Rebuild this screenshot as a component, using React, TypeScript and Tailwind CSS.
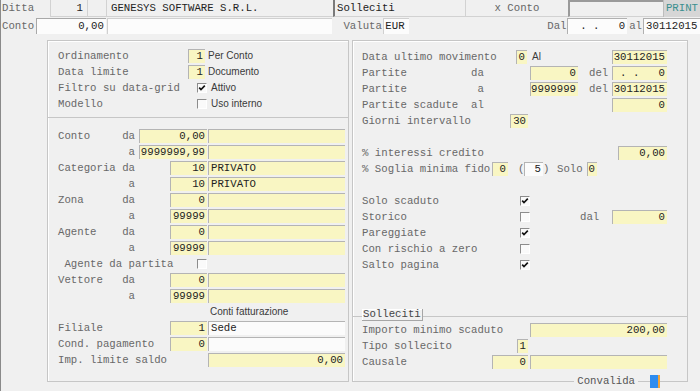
import type { ReactNode } from "react";

const mono = "font-['Liberation_Mono','Courier_New',monospace]";
const sans = "font-['Liberation_Sans',Arial,sans-serif]";

function Box({
  w,
  children,
  white = false,
  left = false,
}: {
  w: string;
  children?: ReactNode;
  white?: boolean;
  left?: boolean;
}) {
  return (
    <div
      className={`h-[14px] shrink-0 flex items-center overflow-hidden whitespace-pre border-l border-t border-[#b4b4b4] text-[#222] ${
        left ? "justify-start pl-[2px]" : "justify-end pr-[2px]"
      } ${white ? "bg-[#fbfbfb]" : "bg-[#f9f6c3]"} ${w}`}
    >
      {children}
    </div>
  );
}

function Check({ on = false }: { on?: boolean }) {
  return (
    <div className="w-[10px] h-[10px] shrink-0 flex items-center justify-center border-l border-t border-[#8c8c8c] border-r border-b border-r-white border-b-white bg-[#fafafa]">
      {on && (
        <svg width="8" height="8" viewBox="0 0 8 8">
          <path d="M1.2 3.6 L3 5.6 L6.8 1.6" stroke="#111" strokeWidth="1.6" fill="none" />
        </svg>
      )}
    </div>
  );
}

function Row({ children }: { children?: ReactNode }) {
  return <div className="flex items-center h-[16px]">{children}</div>;
}

function L({ w, children }: { w: string; children?: ReactNode }) {
  return <div className={`shrink-0 whitespace-pre text-[#686868] ${w}`}>{children}</div>;
}

function S({ children, className = "" }: { children: ReactNode; className?: string }) {
  return <span className={`${sans} text-[10px] text-[#3a3a3a] ${className}`}>{children}</span>;
}

function Range({ label, a, b = "", wide = false }: { label: string; a: string; b?: string; wide?: boolean }) {
  return (
    <Row>
      <L w="w-[81px]">{label}</L>
      <div className="w-[68px] flex justify-end shrink-0">
        <Box w={wide ? "w-[68px]" : "w-[37px]"}>{a}</Box>
      </div>
      <div className="ml-[1px]">
        <Box w="w-[137px]" left>
          {b}
        </Box>
      </div>
    </Row>
  );
}

export default function App() {
  return (
    <div className={`${mono} text-[10.7px] leading-none w-[700px] h-[391px] overflow-hidden bg-[#f0f0f0] border-l border-[#8a8a8a] text-[#686868]`}>
      {/* testata */}
      <div className="flex h-[17px] items-stretch">
        <div className="w-[49px] pl-[1px] flex items-center">Ditta</div>
        <div className="w-[37px] border-l border-b border-[#d2d2d2] flex items-center justify-end pr-[4px] text-[#222]">1</div>
        <div className="w-[19px] border-l border-b border-[#d2d2d2]" />
        <div className="w-[227px] border-l border-b border-[#d2d2d2] flex items-center pl-[4px] text-[#222]">GENESYS SOFTWARE S.R.L.</div>
        <div className="w-[132px] border-l-2 border-b border-l-[#7a7a7a] border-b-[#d2d2d2] flex items-center pl-[2px] text-[#222]">Solleciti</div>
        <div className="w-[103px] border-l border-b border-[#d2d2d2] flex items-center justify-center text-[#666]">x Conto</div>
        <div className="flex-1 border-l-2 border-t-2 border-[#9a9a9a] border-b border-b-[#d2d2d2]" />
        <div className="w-[37px] bg-[#d6d6d6] border-l border-[#bdbdbd] flex items-center justify-end pr-[2px] text-[#3a8f8f]">PRINT</div>
      </div>
      <div className="flex h-[18px] items-center">
        <div className="w-[35px] pl-[1px]">Conto</div>
        <div className="w-[70px] h-[16px] bg-[#fcfcfc] border-l border-t border-[#a8a8a8] flex items-center justify-end pr-[2px] text-[#222]">0,00</div>
        <div className="ml-[1px] w-[226px] h-[16px] bg-[#fcfcfc] border-l border-t border-[#d0d0d0]" />
        <div className="ml-[11px] w-[40px]">Valuta</div>
        <div className="w-[26px] h-[16px] bg-[#fcfcfc] border-l border-t border-[#d0d0d0] flex items-center pl-[1px] text-[#222]">EUR</div>
        <div className="ml-[138px] w-[20px]">Dal</div>
        <div className="w-[60px] h-[16px] bg-[#fcfcfc] border-l border-t border-[#b0b0b0] flex items-center justify-end pr-[2px] whitespace-pre text-[#222]">{". .   0"}</div>
        <div className="ml-[2px] w-[14px]">al</div>
        <div className="w-[57px] h-[16px] bg-[#fcfcfc] border-l border-t border-[#b0b0b0] flex items-center pl-[2px] text-[#222]">30112015</div>
      </div>

      {/* corpo */}
      <div className="flex mt-[5px] ml-[46px] gap-[3px]">
        <div className="w-[302px] h-[342px] flex flex-col border border-[#c6c6c6] shadow-[inset_1px_1px_0_#ffffff]">
          <div className="h-[77px] pt-[7px] pl-[10px] border-b border-[#c6c6c6]">
            <Row>
              <L w="w-[130px]">Ordinamento</L>
              <Box w="w-[17px]">1</Box>
              <S className="ml-[3px]">Per Conto</S>
            </Row>
            <Row>
              <L w="w-[130px]">Data limite</L>
              <Box w="w-[17px]">1</Box>
              <S className="ml-[3px]">Documento</S>
            </Row>
            <Row>
              <L w="w-[139px]">Filtro su data-grid</L>
              <Check on />
              <S className="ml-[4px]">Attivo</S>
            </Row>
            <Row>
              <L w="w-[139px]">Modello</L>
              <Check />
              <S className="ml-[4px]">Uso interno</S>
            </Row>
          </div>
          <div className="pt-[10px] pl-[10px]">
            <Range label="Conto     da" a="0,00" wide />
            <Range label="           a" a="9999999,99" wide />
            <Range label="Categoria da" a="10" b="PRIVATO" />
            <Range label="           a" a="10" b="PRIVATO" />
            <Range label="Zona      da" a="0" />
            <Range label="           a" a="99999" />
            <Range label="Agente    da" a="0" />
            <Range label="           a" a="99999" />
            <Row>
              <L w="w-[139px]"> Agente da partita</L>
              <Check />
            </Row>
            <Range label="Vettore   da" a="0" />
            <Range label="           a" a="99999" />
            <Row>
              <S className="ml-[152px]">Conti fatturazione</S>
            </Row>
            <Row>
              <L w="w-[112px]">Filiale</L>
              <Box w="w-[37px]">1</Box>
              <div className="ml-[1px]">
                <Box w="w-[137px]" left white>
                  Sede
                </Box>
              </div>
            </Row>
            <Row>
              <L w="w-[112px]">Cond. pagamento</L>
              <Box w="w-[37px]">0</Box>
              <div className="ml-[1px]">
                <Box w="w-[137px]" white />
              </div>
            </Row>
            <Row>
              <L w="w-[150px]">Imp. limite saldo</L>
              <Box w="w-[137px]">0,00</Box>
            </Row>
          </div>
        </div>

        <div className="w-[336px] h-[342px] flex flex-col">
          <div className="h-[277px] pt-[8px] pl-[9px] border border-[#c6c6c6] shadow-[inset_1px_1px_0_#ffffff]">
            <Row>
              <L w="w-[154px]">Data ultimo movimento</L>
              <div className="w-[96px] flex items-center shrink-0">
                <Box w="w-[11px]">0</Box>
                <S className="ml-[5px]">Al</S>
              </div>
              <Box w="w-[55px]">30112015</Box>
            </Row>
            <Row>
              <L w="w-[168px]">{"Partite          da"}</L>
              <Box w="w-[48px]">0</Box>
              <L w="w-[34px] pl-[11px]">del</L>
              <Box w="w-[55px]">{". .   0"}</Box>
            </Row>
            <Row>
              <L w="w-[168px]">{"Partite           a"}</L>
              <Box w="w-[48px]">9999999</Box>
              <L w="w-[34px] pl-[11px]">del</L>
              <Box w="w-[55px]">30112015</Box>
            </Row>
            <Row>
              <L w="w-[250px]">{"Partite scadute  al"}</L>
              <Box w="w-[55px]">0</Box>
            </Row>
            <Row>
              <L w="w-[148px]">Giorni intervallo</L>
              <Box w="w-[18px]">30</Box>
            </Row>
            <Row />
            <Row>
              <L w="w-[256px]">% interessi credito</L>
              <Box w="w-[49px]">0,00</Box>
            </Row>
            <Row>
              <L w="w-[130px]">% Soglia minima fido</L>
              <Box w="w-[16px]">0</Box>
              <L w="w-[16px] pl-[10px]">(</L>
              <Box w="w-[19px]" white>
                5
              </Box>
              <L w="w-[14px]">)</L>
              <L w="w-[30px]">Solo</L>
              <Box w="w-[10px]">0</Box>
            </Row>
            <Row />
            <Row>
              <L w="w-[158px]">Solo scaduto</L>
              <Check on />
            </Row>
            <Row>
              <L w="w-[158px]">Storico</L>
              <Check />
              <L w="w-[82px] pl-[50px]">dal</L>
              <Box w="w-[55px]">0</Box>
            </Row>
            <Row>
              <L w="w-[158px]">Pareggiate</L>
              <Check on />
            </Row>
            <Row>
              <L w="w-[158px]">Con rischio a zero</L>
              <Check />
            </Row>
            <Row>
              <L w="w-[158px]">Salto pagina</L>
              <Check on />
            </Row>
          </div>
          <div className="relative h-[65px] pt-[5px] pl-[9px] border border-t-0 border-[#c6c6c6] shadow-[inset_1px_0_0_#ffffff]">
            <div className="absolute -top-[8px] left-[9px] h-[12px] px-[1px] flex items-center bg-[#f0f0f0] border-r border-b border-[#a6a6a6] shadow-[inset_1px_1px_0_#ffffff] text-[#444]">
              Solleciti
            </div>
            <Row>
              <L w="w-[168px]">Importo minimo scaduto</L>
              <Box w="w-[137px]">200,00</Box>
            </Row>
            <Row>
              <L w="w-[155px]">Tipo sollecito</L>
              <Box w="w-[11px]">1</Box>
            </Row>
            <Row>
              <L w="w-[130px]">Causale</L>
              <Box w="w-[36px]">0</Box>
              <div className="ml-[2px]">
                <Box w="w-[137px]" />
              </div>
            </Row>
            <div className="absolute -bottom-[7px] right-[27px] flex items-center h-[13px]">
              <span className="bg-[#f0f0f0] px-[3px] text-[#555]">Convalida</span>
              <span className="w-[12px]" />
              <span className="w-[10px] h-[13px] bg-[#2e8cf0] border-r-2 border-[#f2a33a]" />
            </div>
          </div>
        </div>
      </div>
    </div>
  );
}
